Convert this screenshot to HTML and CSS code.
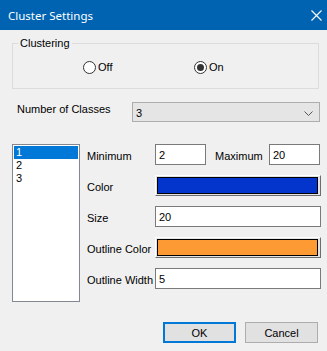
FILE: index.html
```html
<!DOCTYPE html>
<html lang="en">
<head>
  <meta charset="UTF-8">
  <title>Cluster Settings</title>
  <link rel="stylesheet" href="styles.css">
</head>
<body>
  <div class="window">
    <!-- title bar -->
    <div class="titlebar">
      <span class="title">Cluster Settings</span>
      <svg class="close" width="11" height="11" viewBox="0 0 11 11">
        <path d="M0.5 0.5 L10.5 10.5 M10.5 0.5 L0.5 10.5" stroke="#fff" stroke-width="1.1" fill="none"/>
      </svg>
    </div>

    <fieldset class="group">
      <legend>Clustering</legend>
      <div class="radios">
        <label class="radio off"><span class="dot"></span>Off</label>
        <label class="radio checked"><span class="dot"></span>On</label>
      </div>
    </fieldset>

    <div class="classes-row">
      <span class="classes-label">Number of Classes</span>
      <div class="select">
        <span>3</span>
        <svg width="9" height="5" viewBox="0 0 9 5"><path d="M0.5 0.5 L4.5 4.5 L8.5 0.5" stroke="#555" fill="none"/></svg>
      </div>
    </div>

    <div class="main">
      <ul class="listbox">
        <li class="selected">1</li>
        <li>2</li>
        <li>3</li>
      </ul>
      <div class="props">
        <div class="row">
          <label class="lbl">Minimum</label>
          <input class="field short" type="text" value="2">
          <label class="lbl max">Maximum</label>
          <input class="field short" type="text" value="20">
        </div>
        <div class="row">
          <label class="lbl">Color</label>
          <div class="swatch"><span class="fill blue"></span></div>
        </div>
        <div class="row">
          <label class="lbl">Size</label>
          <input class="field wide" type="text" value="20">
        </div>
        <div class="row">
          <label class="lbl">Outline Color</label>
          <div class="swatch"><span class="fill orange"></span></div>
        </div>
        <div class="row">
          <label class="lbl">Outline Width</label>
          <input class="field wide" type="text" value="5">
        </div>
      </div>
    </div>

    <div class="buttons">
      <button type="button" class="ok">OK</button>
      <button type="button" class="cancel">Cancel</button>
    </div>
  </div>
</body>
</html>
```

FILE: styles.css
```css
html, body {
  margin: 0;
  padding: 0;
}
body {
  font-family: "Liberation Sans", Arial, sans-serif;
  font-size: 11px;
  color: #000;
  background: #f0f0f0;
}

.window {
  width: 327px;
  height: 351px;
  background: #f0f0f0;
  overflow: hidden;
}

.titlebar {
  height: 30px;
  background: #0063b1;
  display: flex;
  align-items: center;
  justify-content: space-between;
  padding: 0 5px 0 8px;
  box-sizing: border-box;
}
.titlebar .title {
  font-family: "Noto Sans", sans-serif;
  font-size: 11.5px;
  color: #fff;
}

/* Clustering group */
.group {
  margin: 7px 8px 0 12px;
  padding: 11px 0 14px 0;
  border: 1px solid #dcdcdc;
  min-width: 0;
}
.group legend {
  margin-left: 5px;
  padding: 0 2px;
  line-height: 13px;
}
.radios {
  display: flex;
  padding-left: 70px;
  height: 13px;
}
.radio {
  display: flex;
  align-items: center;
  gap: 2px;
  line-height: 13px;
}
.radio.off {
  width: 111px;
}
.radio .dot {
  width: 13px;
  height: 13px;
  box-sizing: border-box;
  border: 1px solid #333;
  border-radius: 50%;
  background: #fff;
  display: flex;
  align-items: center;
  justify-content: center;
}
.radio.checked .dot::after {
  content: "";
  width: 7px;
  height: 7px;
  border-radius: 50%;
  background: #333;
}

/* number of classes */
.classes-row {
  display: flex;
  align-items: flex-start;
  margin-top: 13px;
}
.classes-label {
  width: 115px;
  margin-left: 17px;
  padding-top: 1px;
  line-height: 13px;
}
.select {
  width: 188px;
  height: 20px;
  box-sizing: border-box;
  border: 1px solid #adadad;
  background: #e5e5e5;
  display: flex;
  align-items: center;
  justify-content: space-between;
  padding: 2px 6px 0 3px;
}

/* list + properties */
.main {
  display: flex;
  margin-top: 22px;
}
.listbox {
  list-style: none;
  margin: 0 0 0 12px;
  padding: 1px;
  width: 68px;
  height: 158px;
  box-sizing: border-box;
  border: 1px solid #828790;
  background: #fff;
}
.listbox li {
  line-height: 13px;
  padding-left: 2px;
}
.listbox li.selected {
  background: #0078d7;
  color: #fff;
}

.props {
  margin-left: 7px;
  display: flex;
  flex-direction: column;
  gap: 10px;
}
.props .row {
  display: flex;
  align-items: center;
  height: 21px;
}
.props .lbl {
  width: 68px;
  padding-top: 2px;
}
.props .lbl.max {
  width: 54px;
  margin-left: 9px;
}
.field {
  height: 21px;
  box-sizing: border-box;
  border: 1px solid #7a7a7a;
  background: #fff;
  font-family: "Liberation Sans", Arial, sans-serif;
  font-size: 11px;
  padding: 0 3px;
  margin: 0;
  outline: none;
}
.field.short {
  width: 51px;
}
.field.wide {
  width: 166px;
}

.swatch {
  width: 166px;
  height: 21px;
  box-sizing: border-box;
  border: 1px solid;
  border-color: #fff #6d6d6d #6d6d6d #fff;
  background: #e3e3e3;
  padding: 1px 2px 1px 1px;
  display: flex;
}
.swatch .fill {
  flex: 1;
  border: 1px solid #000;
}
.fill.blue {
  background: #0335cc;
}
.fill.orange {
  background: #fd9a33;
}

/* dialog buttons */
.buttons {
  display: flex;
  justify-content: flex-end;
  gap: 9px;
  padding-right: 9px;
  margin-top: 20px;
}
.buttons button {
  width: 73px;
  height: 21px;
  box-sizing: border-box;
  background: #e1e1e1;
  border: 1px solid #adadad;
  font-family: "Liberation Sans", Arial, sans-serif;
  font-size: 11px;
  color: #000;
  padding: 0;
}
.buttons button.ok {
  border: 2px solid #0078d7;
}
```
